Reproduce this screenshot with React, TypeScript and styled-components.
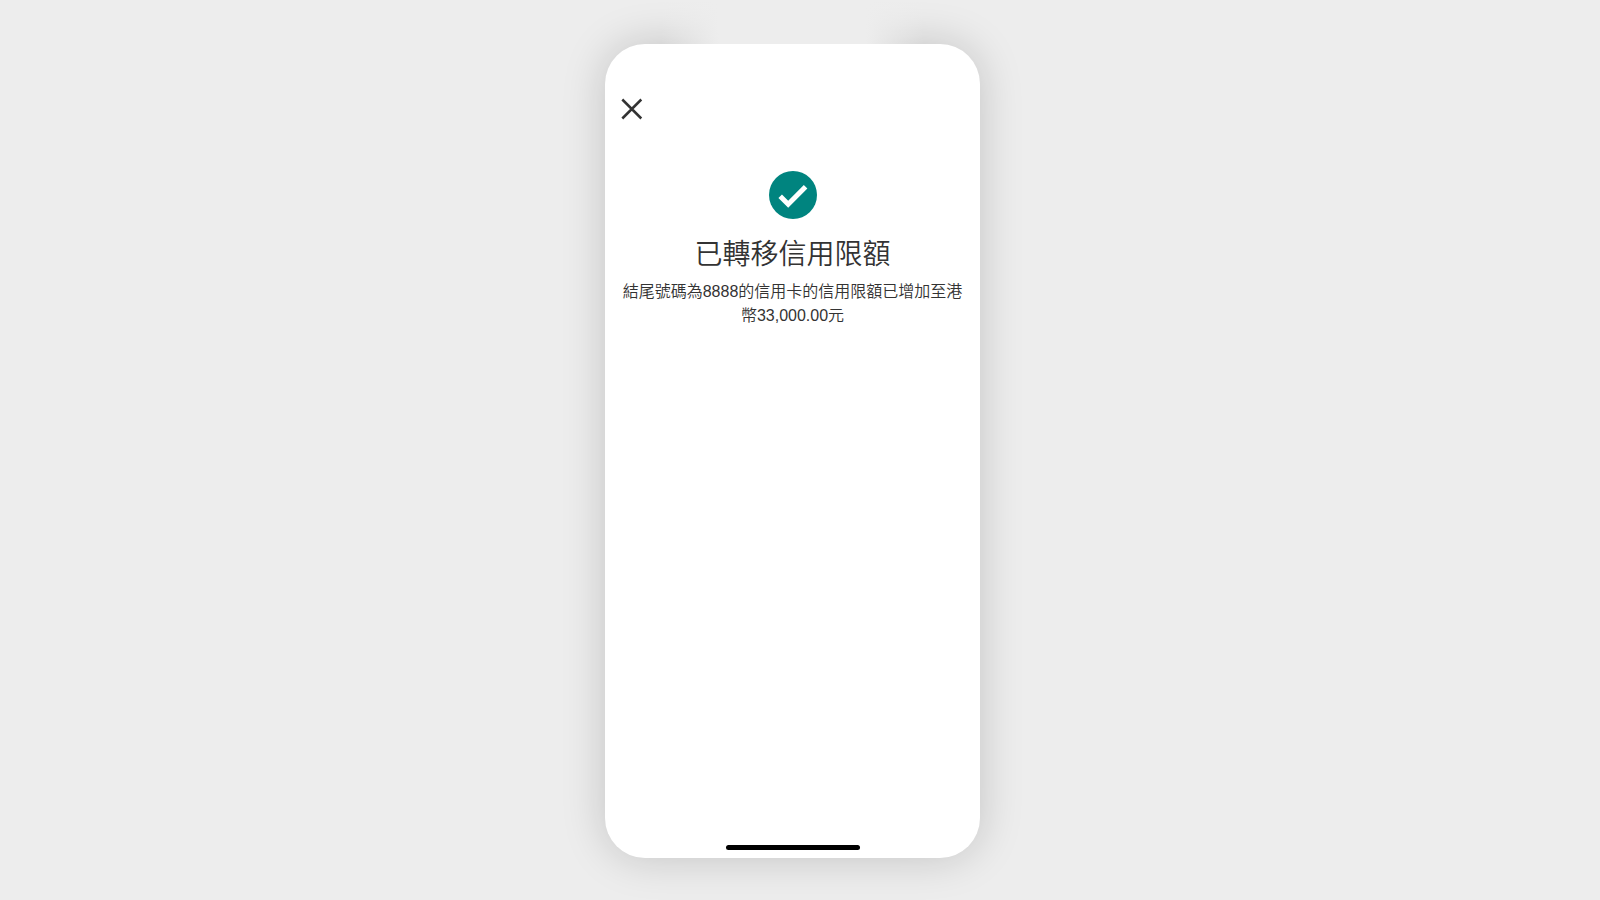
import React from "react";
import styled, { createGlobalStyle } from "styled-components";

const GlobalStyle = createGlobalStyle`
  *, *::before, *::after { box-sizing: border-box; }
  body {
    margin: 0;
    background: #ededed;
    color: #333333;
    font-family: "Liberation Sans", "Noto Sans CJK TC", sans-serif;
  }
`;

const Stage = styled.div`
  min-height: 100vh;
  display: flex;
  justify-content: center;
  padding: 44px 15px 42px 0;
`;

const Phone = styled.main`
  position: relative;
  width: 100%;
  max-width: 375px;
  display: flex;
  flex-direction: column;
  border-radius: 40px;
  background: #ffffff;
  box-shadow: 0 0 44px rgba(0, 0, 0, 0.18);

  /* Fades the shadow out above the notch area. */
  &::before {
    content: "";
    position: absolute;
    left: 56px;
    right: 56px;
    bottom: 100%;
    height: 44px;
    background: linear-gradient(
      90deg,
      rgba(237, 237, 237, 0),
      #ededed 22%,
      #ededed 78%,
      rgba(237, 237, 237, 0)
    );
  }
`;

const TopBar = styled.header`
  display: flex;
  padding: 49px 11px 0;
`;

const CloseButton = styled.button`
  display: flex;
  padding: 4px;
  border: 0;
  background: none;
  color: inherit;
  cursor: pointer;
`;

const Result = styled.section`
  flex: 1;
  display: flex;
  flex-direction: column;
  align-items: center;
  padding: 46px 16px 0;
  text-align: center;
`;

const Title = styled.h1`
  margin: 18px 0 7px;
  font-size: 28px;
  font-weight: 350;
  line-height: 36px;
`;

const Message = styled.p`
  margin: 0;
  font-size: 16px;
  font-weight: 350;
  line-height: 24px;
`;

const HomeIndicator = styled.div`
  align-self: center;
  width: 134px;
  height: 5px;
  margin-bottom: 8px;
  border-radius: 3px;
  background: #000000;
`;

const CloseIcon = () => (
  <svg width="24" height="24" viewBox="0 0 24 24" fill="none" aria-hidden="true">
    <path d="M2.3 2.5 21.3 21.5M21.3 2.5 2.3 21.5" stroke="currentColor" strokeWidth="2.5" />
  </svg>
);

const SuccessIcon = () => (
  <svg width="48" height="48" viewBox="0 0 48 48" fill="none" aria-hidden="true">
    <circle cx="24" cy="24" r="24" fill="#00847f" />
    <path d="M11.2 25.2 19.2 33.2 36.6 15.8" stroke="#ffffff" strokeWidth="5" />
  </svg>
);

export default function App() {
  return (
    <>
      <GlobalStyle />
      <Stage lang="zh-Hant">
        <Phone>
          <TopBar>
            <CloseButton type="button" aria-label="關閉">
              <CloseIcon />
            </CloseButton>
          </TopBar>
          <Result>
            <SuccessIcon />
            <Title>已轉移信用限額</Title>
            <Message>結尾號碼為8888的信用卡的信用限額已增加至港幣33,000.00元</Message>
          </Result>
          <HomeIndicator />
        </Phone>
      </Stage>
    </>
  );
}
